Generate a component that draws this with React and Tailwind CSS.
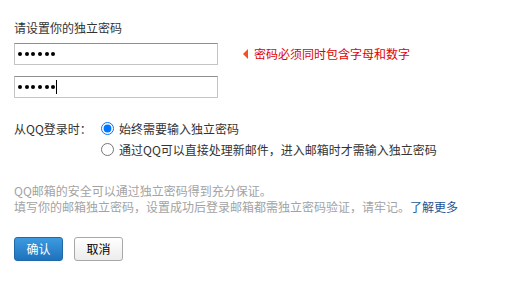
import React from "react";

function Dots({ caret }) {
  return (
    <div className="w-[204px] h-[22px] border border-[#c4c4c4] border-t-[#8f8f8f] pl-[3px] flex items-center bg-white">
      <div className="flex items-center gap-[2.7px]">
        {[0, 1, 2, 3, 4, 5].map((i) => (
          <span key={i} className="w-[4px] h-[4px] rounded-full bg-black"></span>
        ))}
      </div>
      {caret && <span className="ml-[1px] w-[1px] h-[14px] bg-black"></span>}
    </div>
  );
}

export default function App() {
  return (
    <div className="w-[514px] h-[284px] bg-white pl-[14px] pt-[19px] text-[12px] text-[#333] font-['Microsoft_YaHei','Noto_Sans_CJK_SC',sans-serif]">
      <div className="leading-[18px] h-[18px]">请设置你的独立密码</div>
      <div className="mt-[6px] flex items-center h-[22px]">
        <Dots />
        <div className="ml-[25px] flex items-center text-[#e00000] leading-[18px]">
          <span className="w-0 h-0 border-y-[5px] border-y-transparent border-r-[5px] border-r-[#f4511e] mr-[6px]"></span>
          密码必须同时包含字母和数字
        </div>
      </div>
      <div className="mt-[11px] h-[22px]">
        <Dots caret />
      </div>
      <div className="mt-[20px] flex">
        <div className="w-[87px] leading-[21px]">从QQ登录时：</div>
        <div className="flex flex-col">
          <label className="flex items-center h-[21px]">
            <input type="radio" name="qq" defaultChecked className="w-[13px] h-[13px] m-0 mr-[5px] accent-[#0075ff]" />
            始终需要输入独立密码
          </label>
          <label className="flex items-center h-[21px]">
            <input type="radio" name="qq" className="w-[13px] h-[13px] m-0 mr-[5px]" />
            通过QQ可以直接处理新邮件，进入邮箱时才需输入独立密码
          </label>
        </div>
      </div>
      <div className="mt-[23px] text-[#a3a3a3] leading-[16px]">
        <div>QQ邮箱的安全可以通过独立密码得到充分保证。</div>
        <div>
          填写你的邮箱独立密码，设置成功后登录邮箱都需独立密码验证，请牢记。
          <a className="text-[#1d5494] no-underline cursor-pointer">了解更多</a>
        </div>
      </div>
      <div className="mt-[22px] flex gap-[11px]">
        <button className="w-[49px] h-[24px] rounded-[3px] border border-[#1f69a8] bg-gradient-to-b from-[#3c9be0] to-[#1f72bd] text-white text-[12px] leading-[22px]">
          确认
        </button>
        <button className="w-[49px] h-[24px] rounded-[3px] border border-[#a8a8a8] bg-gradient-to-b from-white to-[#ececec] text-black text-[12px] leading-[22px]">
          取消
        </button>
      </div>
    </div>
  );
}
